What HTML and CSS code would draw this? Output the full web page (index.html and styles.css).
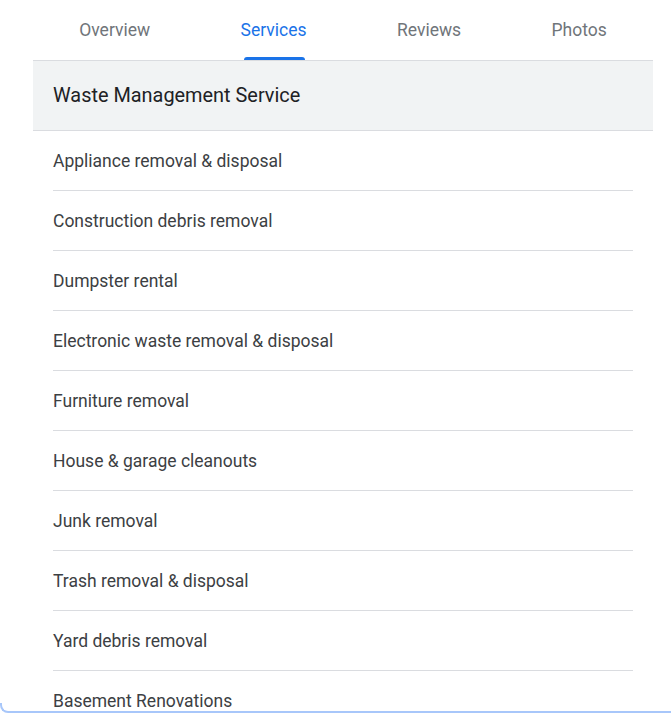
FILE: index.html
```html
<!DOCTYPE html>
<html lang="en">
<head>
<meta charset="utf-8">
<title>Services</title>
<link rel="stylesheet" href="styles.css">
</head>
<body>
<div class="frame"></div>
<div class="panel">
  <nav class="tabs">
    <div class="tab">Overview</div>
    <div class="tab active">Services</div>
    <div class="tab">Reviews</div>
    <div class="tab">Photos</div>
  </nav>
  <div class="category">Waste Management Service</div>
  <ul class="list">
    <li class="item">Appliance removal &amp; disposal</li>
    <li class="item">Construction debris removal</li>
    <li class="item">Dumpster rental</li>
    <li class="item">Electronic waste removal &amp; disposal</li>
    <li class="item">Furniture removal</li>
    <li class="item">House &amp; garage cleanouts</li>
    <li class="item">Junk removal</li>
    <li class="item">Trash removal &amp; disposal</li>
    <li class="item">Yard debris removal</li>
    <li class="item">Basement Renovations</li>
  </ul>
</div>
</body>
</html>
```
FILE: styles.css
```css
html, body {
  margin: 0;
  padding: 0;
  background: #ffffff;
  height: 713px;
  overflow: hidden;
}
body {
  font-family: Roboto, "Liberation Sans", Arial, sans-serif;
  color: #3c4043;
}
.panel {
  margin-left: 33px;
  width: 620px;
}
.tabs {
  display: flex;
  justify-content: space-around;
  height: 60px;
  padding: 0 1px;
}
.tab {
  position: relative;
  font-size: 17.5px;
  color: #70757a;
  line-height: 60px;
}
.tab.active {
  color: #1a73e8;
}
.tab.active::after {
  content: "";
  position: absolute;
  left: 3px;
  right: 2px;
  bottom: 0;
  height: 3px;
  background: #1a73e8;
  border-radius: 3px 3px 0 0;
}
.category {
  background: #f1f3f4;
  border-top: 1px solid #dadce0;
  border-bottom: 1px solid #dadce0;
  height: 69px;
  line-height: 69px;
  padding: 0 20px;
  font-size: 19.9px;
  color: #202124;
}
.list {
  list-style: none;
  margin: 0;
  padding: 0 20px;
}
.item {
  height: 58px;
  padding-top: 1px;
  line-height: 59px;
  border-bottom: 1px solid #dadce0;
  font-size: 17.5px;
  color: #3c4043;
}
.frame {
  position: fixed;
  left: 0;
  right: -20px;
  bottom: 0;
  height: 8px;
  border-left: 2px solid #a8c7fa;
  border-bottom: 2px solid #a8c7fa;
  border-bottom-left-radius: 8px;
  z-index: 2;
  pointer-events: none;
}
```
